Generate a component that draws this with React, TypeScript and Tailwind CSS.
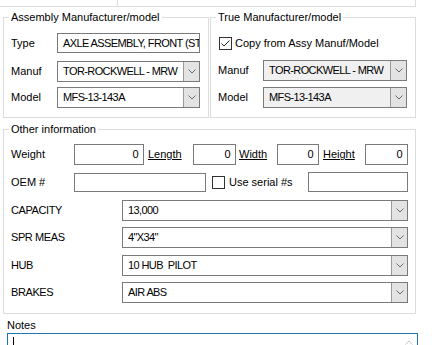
import React from "react";

const Chevron = () => (
  <svg width="8" height="5" viewBox="0 0 8 5" className="block">
    <path d="M0.5 0.5 L4 4 L7.5 0.5" fill="none" stroke="#6a6a6a" strokeWidth="1" />
  </svg>
);

const Combo = ({ value, w, disabled }: { value: string; w: string; disabled?: boolean }) => (
  <div className={`flex h-[21px] border border-[#7a7a7a] ${w} ${disabled ? "bg-[#f0f0f0]" : "bg-white"}`}>
    <div className="flex-1 overflow-hidden whitespace-nowrap pl-[5px] leading-[19px] tracking-[-0.6px]">{value}</div>
    <div className="flex w-[16px] items-center justify-center border-l border-[#9a9a9a] bg-[#e3e3e3]">
      <Chevron />
    </div>
  </div>
);

const TextBox = ({ value, w, h = "h-[20px]", right }: { value?: string; w: string; h?: string; right?: boolean }) => (
  <div
    className={`${w} ${h} overflow-hidden whitespace-nowrap border border-[#7a7a7a] bg-white leading-[18px] tracking-[-0.6px] ${
      right ? "pr-[5px] text-right" : "pl-[5px]"
    }`}
  >
    {value}
  </div>
);

const CheckBox = ({ checked }: { checked?: boolean }) => (
  <div className="h-[13px] w-[13px] shrink-0 border border-[#333333] bg-white">
    {checked && (
      <svg width="11" height="11" viewBox="0 0 11 11" className="block">
        <path d="M1.5 5.5 L4 8 L9.5 2.5" fill="none" stroke="#222" strokeWidth="1" />
      </svg>
    )}
  </div>
);

const Label = ({ children, w }: { children: React.ReactNode; w: string }) => (
  <span className={`${w} shrink-0`}>{children}</span>
);

export default function App() {
  return (
    <div className="h-[345px] w-[439px] overflow-hidden bg-white font-['Liberation_Sans',Arial,sans-serif] text-[11px] text-black">
      {/* remnants of controls above */}
      <div className="flex h-[7px]">
        <div className="w-[118px] border-b border-r border-[#dcdcdc]" />
        <div className="w-[298px] border-b border-r border-[#dcdcdc]" />
      </div>

      <div className="mt-[2px] flex">
        <fieldset className="ml-[3px] h-[109px] w-[206px] border border-[#dcdcdc] pl-[5px]">
          <legend className="px-[2px] leading-[16px]">Assembly Manufacturer/model</legend>
          <div className="pl-[2px] pt-[8px]">
            <div className="flex h-[20px] items-center">
              <Label w="w-[46px]">Type</Label>
              <TextBox w="w-[143px]" value="AXLE ASSEMBLY, FRONT (ST" />
            </div>
            <div className="mt-[8px] flex h-[21px] items-center">
              <Label w="w-[46px]">Manuf</Label>
              <Combo w="w-[143px]" value="TOR-ROCKWELL - MRW" />
            </div>
            <div className="mt-[5px] flex h-[21px] items-center">
              <Label w="w-[46px]">Model</Label>
              <Combo w="w-[143px]" value="MFS-13-143A" />
            </div>
          </div>
        </fieldset>

        <fieldset className="ml-[1px] h-[109px] w-[206px] border border-[#dcdcdc] pl-[5px]">
          <legend className="px-[2px] leading-[16px]">True Manufacturer/model</legend>
          <div className="pl-[2px] pt-[8px]">
            <div className="flex h-[20px] items-center">
              <div className="ml-[1px]">
                <CheckBox checked />
              </div>
              <span className="ml-[3px]">Copy from Assy Manuf/Model</span>
            </div>
            <div className="mt-[7px] flex h-[21px] items-center">
              <Label w="w-[45px]">Manuf</Label>
              <Combo w="w-[144px]" value="TOR-ROCKWELL - MRW" disabled />
            </div>
            <div className="mt-[6px] flex h-[21px] items-center">
              <Label w="w-[45px]">Model</Label>
              <Combo w="w-[144px]" value="MFS-13-143A" disabled />
            </div>
          </div>
        </fieldset>
      </div>

      <fieldset className="ml-[3px] mt-[3px] h-[193px] w-[413px] border border-[#dcdcdc] pl-[5px]">
        <legend className="px-[2px] leading-[16px]">Other information</legend>
        <div className="pl-[2px] pt-[7px]">
          <div className="flex h-[21px] items-center">
            <Label w="w-[63px]">Weight</Label>
            <TextBox w="w-[70px]" h="h-[21px]" value="0" right />
            <span className="w-[49px] shrink-0 pl-[4px]">
              <span className="underline">Length</span>
            </span>
            <TextBox w="w-[43px]" h="h-[21px]" value="0" right />
            <span className="w-[41px] shrink-0 pl-[3px]">
              <span className="underline">Width</span>
            </span>
            <TextBox w="w-[42px]" h="h-[21px]" value="0" right />
            <span className="w-[46px] shrink-0 pl-[4px]">
              <span className="underline">Height</span>
            </span>
            <TextBox w="w-[43px]" h="h-[21px]" value="0" right />
          </div>

          <div className="mt-[7px] flex h-[20px] items-center">
            <Label w="w-[63px]">OEM #</Label>
            <TextBox w="w-[132px]" h="h-[19px]" />
            <div className="ml-[6px]">
              <CheckBox />
            </div>
            <span className="ml-[4px] w-[79px] shrink-0">Use serial #s</span>
            <TextBox w="w-[100px]" h="h-[20px]" />
          </div>

          <div className="mt-[8px] flex h-[21px] items-center">
            <Label w="w-[111px] tracking-[-0.4px]">CAPACITY</Label>
            <Combo w="w-[286px]" value="13,000" />
          </div>
          <div className="mt-[6px] flex h-[21px] items-center">
            <Label w="w-[111px] tracking-[-0.4px]">SPR MEAS</Label>
            <Combo w="w-[286px]" value={'4"X34"'} />
          </div>
          <div className="mt-[7px] flex h-[21px] items-center">
            <Label w="w-[111px] tracking-[-0.4px]">HUB</Label>
            <Combo w="w-[286px]" value={"10 HUB\u00a0 PILOT"} />
          </div>
          <div className="mt-[6px] flex h-[21px] items-center">
            <Label w="w-[111px] tracking-[-0.4px]">BRAKES</Label>
            <Combo w="w-[286px]" value="AIR ABS" />
          </div>
        </div>
      </fieldset>

      <div className="ml-[7px] mt-[4px] leading-[15px]">Notes</div>
      <div className="ml-[7px] flex h-[30px] w-[411px] border border-[#1f78b0] bg-white">
        <div className="flex-1 pl-[5px] pt-[3px]">
          <div className="h-[14px] w-[1px] bg-black" />
        </div>
        <div className="flex w-[17px] justify-center pt-[6px]">
          <svg width="8" height="5" viewBox="0 0 8 5" className="block">
            <path d="M0.5 4.5 L4 1 L7.5 4.5" fill="none" stroke="#c2c2c2" strokeWidth="1" />
          </svg>
        </div>
      </div>
    </div>
  );
}
